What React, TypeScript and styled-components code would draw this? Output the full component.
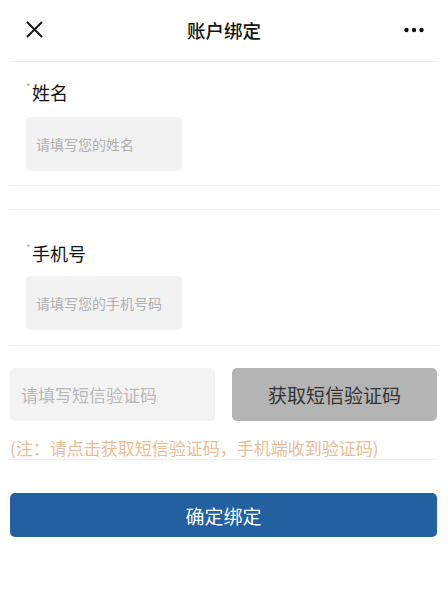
import React, { useState } from 'react'
import styled, { createGlobalStyle } from 'styled-components'

const GlobalStyle = createGlobalStyle`
  body {
    margin: 0;
    background: #ffffff;
    font-family: "Noto Sans CJK SC", "Noto Sans", sans-serif;
  }
  * { box-sizing: border-box; }
`

const Page = styled.div`
  width: 448px;
  height: 600px;
  background: #fff;
  display: flex;
  flex-direction: column;
`

const Header = styled.div`
  height: 61px;
  display: flex;
  align-items: center;
  justify-content: space-between;
  padding: 0 24px 2px 24px;
`

const HeaderButton = styled.button`
  border: none;
  background: none;
  padding: 0;
  width: 20px;
  height: 20px;
  display: flex;
  align-items: center;
  justify-content: center;
  color: #111;
`

const Title = styled.div`
  font-size: 18.5px;
  font-weight: 500;
  color: #111;
`

const Divider = styled.div`
  height: 1px;
  margin: 0 10px;
  background: #efefef;
`

const Section = styled.div<{ $top: number; $bottom: number; $gap: number }>`
  display: flex;
  flex-direction: column;
  gap: ${p => p.$gap}px;
  padding: ${p => p.$top}px 26px ${p => p.$bottom}px 26px;
`

const Label = styled.label`
  font-size: 18px;
  line-height: 24px;
  color: #111;
  display: flex;
`

const Star = styled.span`
  color: #e8a080;
  font-size: 10px;
  line-height: 14px;
  width: 6px;
`

const Field = styled.input`
  width: 156px;
  height: 54px;
  border: none;
  border-radius: 5px;
  background: #f2f2f2;
  padding: 0 10px;
  font-family: inherit;
  font-size: 14px;
  color: #333;
  outline: none;
  &::placeholder { color: #b0b0b0; }
`

const Spacer = styled.div<{ $h: number }>`
  height: ${p => p.$h}px;
`

const CodeRow = styled.div`
  display: grid;
  grid-template-columns: 205px 205px;
  justify-content: space-between;
  padding: 0 11px 0 10px;
  margin-top: 22px;
`

const CodeField = styled.input`
  height: 53px;
  border: none;
  border-radius: 5px;
  background: #f3f3f3;
  padding: 0 11px;
  font-family: inherit;
  font-size: 17px;
  outline: none;
  &::placeholder { color: #b8b8b8; }
`

const CodeButton = styled.button`
  height: 53px;
  border: none;
  border-radius: 5px;
  background: #b4b4b4;
  color: #333;
  font-family: inherit;
  font-size: 19px;
`

const Note = styled.div`
  padding: 0 10px;
  margin-top: 16px;
  font-size: 17px;
  line-height: 22px;
  color: #e8bd95;
  white-space: nowrap;
`

const SubmitButton = styled.button`
  margin: 33px 11px 0 10px;
  height: 44px;
  border: none;
  border-radius: 5px;
  background: #22609f;
  color: #fff;
  font-family: inherit;
  font-size: 19px;
`

export default function App() {
  const [name, setName] = useState("")
  const [phone, setPhone] = useState("")
  const [code, setCode] = useState("")

  return (
    <Page>
      <GlobalStyle />
      <Header>
        <HeaderButton aria-label="close">
          <svg width="17" height="17" viewBox="0 0 17 17">
            <path d="M1 1 L16 16 M16 1 L1 16" stroke="#111" strokeWidth="1.8" fill="none" />
          </svg>
        </HeaderButton>
        <Title>账户绑定</Title>
        <HeaderButton aria-label="more">
          <svg width="20" height="6" viewBox="0 0 20 6">
            <circle cx="2.5" cy="3" r="2.2" fill="#111" />
            <circle cx="10" cy="3" r="2.2" fill="#111" />
            <circle cx="17.5" cy="3" r="2.2" fill="#111" />
          </svg>
        </HeaderButton>
      </Header>
      <Divider />
      <Section $top={18} $bottom={14} $gap={13}>
        <Label htmlFor="name"><Star>*</Star>姓名</Label>
        <Field id="name" placeholder="请填写您的姓名" value={name} onChange={e => setName(e.target.value)} />
      </Section>
      <Divider />
      <Spacer $h={23} />
      <Divider />
      <Section $top={31} $bottom={15} $gap={11}>
        <Label htmlFor="phone"><Star>*</Star>手机号</Label>
        <Field id="phone" placeholder="请填写您的手机号码" value={phone} onChange={e => setPhone(e.target.value)} />
      </Section>
      <Divider />
      <CodeRow>
        <CodeField placeholder="请填写短信验证码" value={code} onChange={e => setCode(e.target.value)} />
        <CodeButton>获取短信验证码</CodeButton>
      </CodeRow>
      <Note>(注：请点击获取短信验证码，手机端收到验证码)</Note>
      <Divider />
      <SubmitButton>确定绑定</SubmitButton>
    </Page>
  )
}
